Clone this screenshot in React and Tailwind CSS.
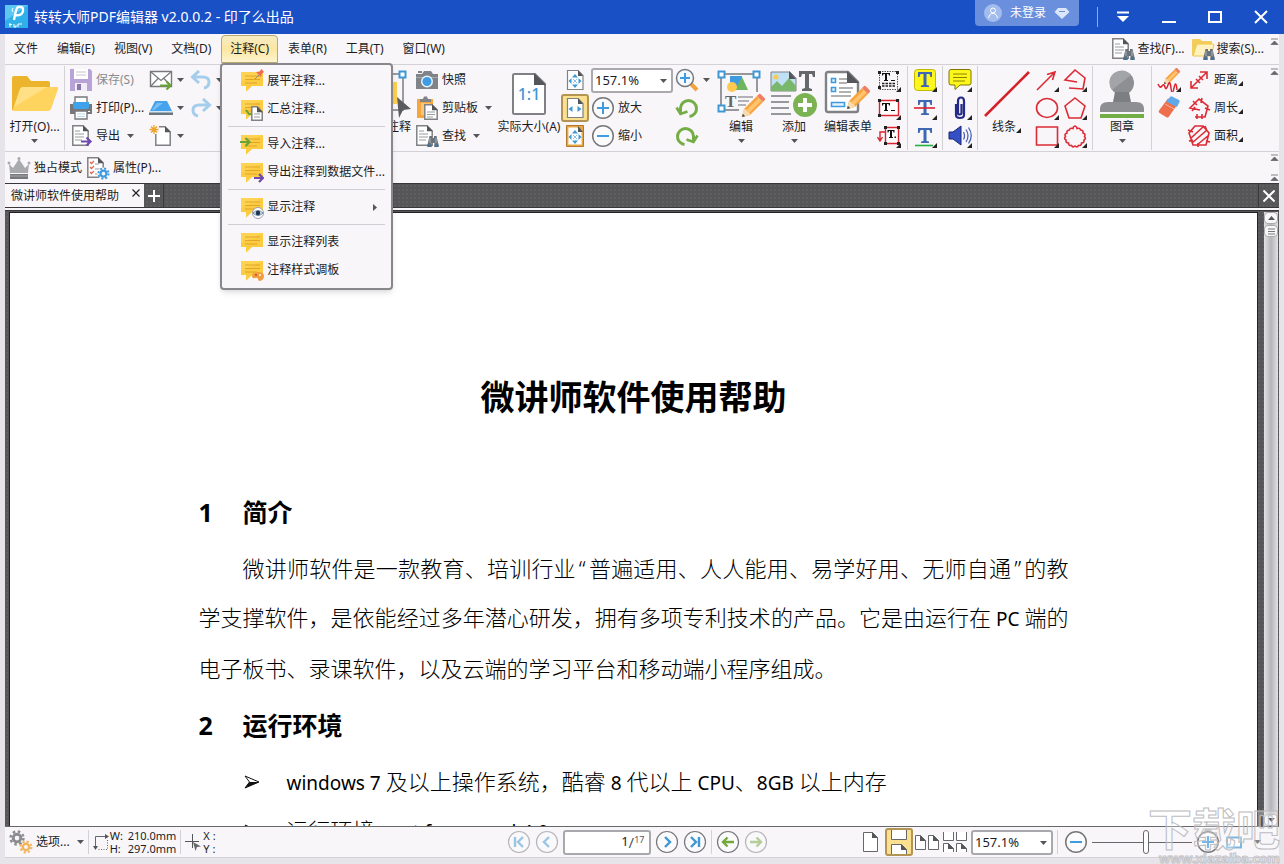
import React from "react";

/* ---------- drawing helpers ---------- */

function Icon({ w = 24, h = 24, box, children }) {
  return (
    <svg width={w} height={h} viewBox={box || `0 0 ${w} ${h}`} fill="none" aria-hidden="true" className="shrink-0">
      {children}
    </svg>
  );
}

const Caret = () => (
  <Icon w={7} h={4}>
    <path d="M0 0h7L3.5 4z" fill="#55565a" />
  </Icon>
);

const Corner = ({ x = 24, y = 24 }) => <path d={`M${x} ${y - 5}v5h-5z`} fill="#222" />;

const FoldedPage = ({ x = 0, y = 0, w = 16, h = 20 }) => (
  <g transform={`translate(${x} ${y})`}>
    <path d={`M.8.8H${w - 6}L${w - 0.8} 6V${h - 0.8}H.8z`} fill="#fff" stroke="#808184" strokeWidth="1.5" />
    <path d={`M${w - 6} .3V6.3H${w}z`} fill="#55565a" />
  </g>
);

const PageLines = ({ x = 0, y = 0 }) => (
  <path d={`M${x} ${y}h5M${x} ${y + 3}h9M${x} ${y + 6}h9M${x} ${y + 9}h7`} stroke="#9a9b9e" strokeWidth="1.2" />
);

const Binoculars = ({ x = 12, y = 11 }) => (
  <g transform={`translate(${x} ${y})`}>
    <path d="M2.5 1h2.5v2h2V1h2.5l2 8.500V12H7.500V8h-3v4H.5V9.500z" fill="#6a737b" />
    <path d="M.5 9.500h4V12h-4zM7.500 9.500h4V12h-4z" fill="#49708f" />
    <path d="M3 3v5M9 3v5" stroke="#a9b3ba" />
  </g>
);

const Pencil = ({ x = 0, y = 0, s = 1 }) => (
  <g transform={`translate(${x} ${y}) scale(${s})`}>
    <path d="M0 23l2-8L15 2l6 6L8 21z" fill="#f8a440" />
    <path d="M3.500 17L17 4l2.500 2.500L6 20z" fill="#ffc46e" />
    <path d="M15 2l2-2q1-.6 2 .4l3.500 3.500q1 1 .3 2L21 8z" fill="#f07f62" />
    <path d="M0 23l2-8q3 .5 3 3 3 0 3 3z" fill="#f7dcb2" />
    <path d="M0 23l.8-3.200 2.400 2.400z" fill="#444" />
  </g>
);

const NoteShape = ({ x = 1, y = 3 }) => (
  <g transform={`translate(${x} ${y})`}>
    <path d="M0 0h22v14H11l-6 5.500V14H0z" fill="#fdd351" />
    <path d="M0 10L22 0v14H11l-6 5.500V14H0z" fill="#f9c73c" opacity=".7" />
    <path d="M4 4h15M4 7.500h15M4 11h12" stroke="#e2a52a" strokeWidth="1.200" />
  </g>
);

const FourArrows = ({ cx = 8, cy = 10 }) => (
  <g transform={`translate(${cx} ${cy})`} fill="#3f97d3">
    <path d="M0-7l3 3.500h-6zM0 7l3-3.500h-6zM-6.500 0l3-3v6zM6.500 0l-3-3v6z" />
    <path d="M-2-2l4 4M2-2l-4 4" stroke="#8cc3e8" />
  </g>
);

/* ---------- toolbar icons ---------- */

const FolderIcon = ({ w = 48, h = 40 }) => (
  <Icon w={w} h={h} box="0 0 48 40">
    <path d="M1 4q0-2 2-2h13l4 5h17q2 0 2 2v5H12L3 37q-2 0-2-2z" fill="#ecb42c" />
    <path d="M12 13h34q2 0 1 2l-7 20q-1 2-3 2H3q-2 0-1-2l7-20q1-2 3-2z" fill="#ffd45e" />
    <path d="M12 13h24L3 33l6-18q1-2 3-2z" fill="#ffe085" />
  </Icon>
);
const SaveIcon = () => (
  <Icon>
    <path d="M1 1h20l2 2v20H1z" fill="#b8a3d6" />
    <path d="M5 1h14v10H5z" fill="#fff" />
    <path d="M7 4h10M7 7h10" stroke="#c6c6cc" />
    <path d="M6 15h12v8H6z" fill="#f0edf6" />
    <path d="M8 16h4v6H8z" fill="#8b77ad" />
  </Icon>
);
const PrintIcon = () => (
  <Icon>
    <path d="M6 1h12v7H6z" fill="#fff" stroke="#77787b" strokeWidth="1.400" />
    <path d="M1 8h22v10H1z" fill="#77787b" />
    <path d="M4 6h16v5q0 2-2 2H6q-2 0-2-2z" fill="#3fa2ec" />
    <path d="M6 15h12v8H6z" fill="#fff" stroke="#77787b" strokeWidth="1.400" />
    <path d="M8 18h8M8 20.500h8" stroke="#b7dbf3" />
    <path d="M19 15.500h2" stroke="#fff" />
  </Icon>
);
const ExportIcon = () => (
  <Icon>
    <FoldedPage x={3} y={1} w={17} h={21} />
    <PageLines x={6} y={7} />
    <path d="M12 17.500h9M17.500 13.500l4 4-4 4" stroke="#6f4ab0" strokeWidth="2.200" />
  </Icon>
);
const MailIcon = () => (
  <Icon>
    <path d="M1.500 3.500h21v15h-21z" fill="#fff" stroke="#77787b" strokeWidth="1.400" />
    <path d="M2 4l10 8.500L22 4M2 18l7.500-8M22 18l-7.500-8" stroke="#77787b" strokeWidth="1.200" />
    <path d="M11 17.500h10M17.500 13.500l4 4-4 4" stroke="#6aa338" strokeWidth="2.200" />
  </Icon>
);
const ScanIcon = () => (
  <Icon>
    <path d="M6 5h12l5 10H1z" fill="#45a3ee" />
    <path d="M8 7h6l-9 7H3z" fill="#7cc0f5" />
    <path d="M0 15h24v4H0z" fill="#6b7680" />
    <path d="M0 15h24v1.500H0z" fill="#d7e6f2" />
  </Icon>
);
const NewIcon = () => (
  <Icon>
    <FoldedPage x={6} y={2} w={16} h={20} />
    <path d="M0 0h10v10H4z" fill="#f8f6f9" />
    <path d="M5 1v9M.5 5.500h9M2 2.500l6 6M8 2.500l-6 6" stroke="#f0a32e" strokeWidth="1.300" />
  </Icon>
);
const UndoIcon = ({ flip }) => (
  <Icon w={22} h={20}>
    <g transform={flip ? "translate(22 0) scale(-1 1)" : undefined}>
      <path d="M3 7h10q6 0 6 5t-5 6" stroke="#a5cdec" strokeWidth="3" />
      <path d="M9 1L2.500 7 9 13" stroke="#a5cdec" strokeWidth="3" />
    </g>
  </Icon>
);
const SelectNoteIcon = () => (
  <Icon w={48} h={48}>
    <path d="M6 4h34v36H6z" stroke="#9a9b9e" strokeWidth="2" />
    <path d="M6 12h28v22H6z" fill="#fdd04a" />
    <path d="M10 18h20M10 23h20M10 28h20" stroke="#dba127" strokeWidth="2" />
    <path d="M36.500 1.500h6v6h-6z" fill="#fff" stroke="#3f97d3" strokeWidth="2" />
    <path d="M34 27l14 12-8 1-4 8z" fill="#5a5b5f" />
  </Icon>
);
const CameraIcon = () => (
  <Icon>
    <path d="M1 6h22v15H1z" fill="#808387" />
    <path d="M7 6l2-3h7l2 3zM3 3h4v2H3z" fill="#808387" />
    <path d="M1 9.500h22" stroke="#a6a8ab" />
    <circle cx="12" cy="13.500" r="6" fill="#eaf4fb" />
    <circle cx="12" cy="13.500" r="4.500" fill="#3f9be6" />
  </Icon>
);
const ClipboardIcon = () => (
  <Icon>
    <path d="M2 3h16v19H2z" fill="#f6a63c" />
    <path d="M5 3h3l1-2.500h3L13 3h3v3H5z" fill="#808387" />
    <path d="M6 7h9v12H6z" fill="#fbc67c" />
    <FoldedPage x={9} y={8} w={14} h={16} />
    <path d="M12 16h8M12 18.500h8M12 21h6" stroke="#9a9b9e" />
  </Icon>
);
const FindIcon = () => (
  <Icon>
    <FoldedPage x={1} y={1} w={17} h={21} />
    <PageLines x={4} y={7} />
    <Binoculars />
  </Icon>
);
const FolderSearchIcon = () => (
  <Icon>
    <path d="M1 3q0-1 1-1h7l2 2h9q1 0 1 1v3H7L2 19q-1 0-1-1z" fill="#f3cd5b" />
    <path d="M7 7h15q1 0 1 1l-3 10q0 1-1 1H2L5.500 8q.5-1 1.500-1z" fill="#fff2bf" stroke="#f0c64e" />
    <Binoculars />
  </Icon>
);
const ActualSizeIcon = () => (
  <Icon w={36} h={44}>
    <path d="M2 3.500Q2 2 3.500 2H24l10 10v28.500q0 1.500-1.500 1.500h-29Q2 42 2 40.500z" fill="#fff" stroke="#808184" strokeWidth="2" />
    <path d="M23 1v12h12z" fill="#55565a" />
    <text x="18" y="28" textAnchor="middle" fontSize="16" fill="#3d97d6" className="font-['Noto_Sans',sans-serif] font-medium">1:1</text>
  </Icon>
);
const FitPageIcon = ({ mode }) => (
  <Icon w={18} h={22}>
    {mode === "visible" && <path d="M.5.500h17v21H.5z" fill="#e7a646" stroke="#b17a2b" />}
    <path d={mode === "visible" ? "M3 3h8l4 4v12H3z" : "M1.500 1.500H12l5 5v14H1.500z"} fill="#fff" stroke={mode === "visible" ? "#fff" : "#808184"} strokeWidth="1.200" />
    <path d="M12 1v6h5z" fill="#55565a" />
    {mode === "width" ? (
      <path d="M2.500 12l4-3v6zM15.500 12l-4-3v6z" fill="#3f97d3" />
    ) : (
      <FourArrows cx={9} cy={12} />
    )}
  </Icon>
);
const CircleIcon = ({ plus }) => (
  <Icon>
    <circle cx="12" cy="12" r="10.300" fill="#fbfbfc" stroke="#77787b" strokeWidth="1.500" />
    <path d={plus ? "M6 12h12M12 6v12" : "M6 12h12"} stroke="#3f9be0" strokeWidth="2" />
  </Icon>
);
const MagnifierIcon = () => (
  <Icon>
    <path d="M16 16l6 6" stroke="#f3a33b" strokeWidth="4" />
    <circle cx="10" cy="10" r="8.500" fill="#f4fafe" stroke="#77787b" strokeWidth="1.500" />
    <path d="M5 10h10M10 5v10" stroke="#3f9be0" strokeWidth="2" />
  </Icon>
);
const RotateIcon = ({ flip }) => (
  <Icon>
    <g transform={flip ? "translate(24 0) scale(-1 1)" : undefined}>
      <path d="M5.500 17V12a8 8 0 1 1 9 8.500" stroke="#74ac45" strokeWidth="3" />
      <path d="M1.500 11.500l4 6.500 7-2.500" stroke="#74ac45" strokeWidth="2.600" />
    </g>
  </Icon>
);
const EditIcon = () => (
  <Icon w={48} h={48}>
    <path d="M4 4h36v18M4 4v36h18" stroke="#97989b" strokeWidth="2" />
    <path d="M13 6h12v11H13z" fill="#3f9be0" />
    <path d="M18 20l7-13 6 13z" fill="#6fb560" />
    <circle cx="15" cy="17" r="5" fill="#fdc94f" />
    <path d="M1.500 1.500h6v6h-6zM36.500 1.500h6v6h-6zM1.500 35.500h6v6h-6z" fill="#fff" stroke="#3f97d3" strokeWidth="2" />
    <text x="8" y="37" fontSize="17" fill="#66676b" className="font-['Liberation_Serif',serif] font-bold">T</text>
    <path d="M21 27h15M21 31h11M21 35h8" stroke="#9a9b9e" strokeWidth="1.500" />
    <Pencil x={25} y={24} />
  </Icon>
);
const AddIcon = () => (
  <Icon w={48} h={48}>
    <path d="M1 2h19l6 6v13H1z" fill="#bfe0f5" stroke="#808184" />
    <path d="M1 17l6-6 5 5 7-8 7 8v5H1z" fill="#79b76a" />
    <circle cx="6" cy="7" r="2.500" fill="#fdc94f" />
    <path d="M19 1v8h7z" fill="#55565a" />
    <path d="M29 1h16v6h-2l-1-3h-3v14l3 1v2H32v-2l3-1V4h-3l-1 3h-2z" fill="#66676b" />
    <path d="M1 26h20M1 32h18M1 38h18M1 44h20" stroke="#97989b" strokeWidth="2" />
    <circle cx="35" cy="35" r="12" fill="#7cb352" />
    <path d="M35 28v14M28 35h14" stroke="#fff" strokeWidth="4" />
  </Icon>
);
const EditFormIcon = () => (
  <Icon w={48} h={48}>
    <path d="M2 4q0-2 2-2h20l10 10v28q0 2-2 2H4q-2 0-2-2z" fill="#fff" stroke="#808184" strokeWidth="2.400" />
    <path d="M23 1v12h12z" fill="#55565a" />
    <path d="M7.500 8.500h4v4h-4zM7.500 17.500h4v4h-4zM7.500 32.500h13v4h-13z" fill="#e4f2fb" stroke="#3f9be0" strokeWidth="1.600" />
    <path d="M15 9h8M15 13h8M15 18h14M15 22h12M7 26h20" stroke="#97989b" strokeWidth="1.600" />
    <Pencil x={23} y={16} />
  </Icon>
);
const TextBoxIcon = ({ kind }) => (
  <Icon>
    {kind === "typewriter" && (
      <g>
        <path d="M2.500 3.500h18v18h-18z" stroke="#555" strokeDasharray="1.500 1" />
        <path d="M5 5h8v2.500h-1L11.500 6H10v6h1v1H7v-1h1V6H6.500L6 7.500H5zM14 12h4v1h-4z" fill="#111" />
        <path d="M5 15.500h13M5 18h13" stroke="#222" strokeDasharray="2.500 1" strokeWidth="1.600" />
      </g>
    )}
    {kind === "box" && (
      <g>
        <path d="M2.500 4.500h19v15h-19z" fill="#fff" stroke="#d9242f" strokeWidth="1.400" />
        <path d="M5 7h8v2.500h-1L11.500 8H10v6h1v1H7v-1h1V8H6.500L6 9.500H5zM14 14h4v1h-4z" fill="#111" />
      </g>
    )}
    {kind === "callout" && (
      <g>
        <path d="M8.500 3.500h13v16h-13z" fill="#fff" stroke="#d9242f" strokeWidth="1.400" />
        <path d="M8 8H3v8M.5 13L3 17l2.500-4" stroke="#d9242f" strokeWidth="1.400" />
        <path d="M10.500 6h7v2.500h-1L16 7h-1v6h1v1h-4v-1h1V7h-1l-.5 1.500h-1zM17.500 12.500h1.500V14h-1.500z" fill="#111" />
      </g>
    )}
    <path
      d={kind === "callout" ? "M7 2h3v3H7zM20 2h3v3h-3zM7 18h3v3H7zM20 18h3v3h-3z" : "M1 3h3v3H1zM19 3h3v3h-3zM1 18h3v3H1z"}
      fill="#222"
    />
    <Corner />
  </Icon>
);
const MarkTextIcon = ({ kind }) => (
  <Icon>
    {kind === "highlight" && <rect x="1.500" y="1.500" width="21" height="21" rx="3" fill="#fdf61d" stroke="#c5b800" />}
    <path d="M5 4h14v5h-1.500L16.500 6H13.500v11l2.500.6V19H8v-1.400l2.500-.6V6H7.500L6.500 9H5z" fill="#3d68b5" />
    {kind === "strike" && <path d="M1 12h21" stroke="#d9242f" strokeWidth="1.600" />}
    {kind === "underline" && <path d="M2 21.500h18" stroke="#24b33c" strokeWidth="1.600" />}
    <Corner />
  </Icon>
);
const StickyIcon = () => (
  <Icon>
    <path d="M3 1.500h18q2 0 2 2V15q0 2-2 2h-9l-5 4.500V17H3q-2 0-2-2V3.500q0-2 2-2z" fill="#fdf61d" stroke="#7d7600" />
    <path d="M5 6h14M5 9.500h14M5 13h12" stroke="#8c8400" />
    <Corner />
  </Icon>
);
const ClipIcon = () => (
  <Icon>
    <path d="M8 8v11q0 3 4 3t4-3V5q0-3.500-3-3.500T10 5v12q0 1.500 1.700 1.500T13.500 17V8" stroke="#252a86" strokeWidth="2.200" />
    <Corner />
  </Icon>
);
const SoundIcon = () => (
  <Icon>
    <path d="M1 8h4l8-6v19l-8-6H1z" fill="#3550c4" stroke="#1b2678" />
    <path d="M15.500 8q2 4 0 7.500M18 5.500q4 6 0 12.500M20.500 3.500q5.500 8 0 16" stroke="#4a63b8" strokeWidth="1.300" />
    <Corner />
  </Icon>
);
const LineIcon = () => (
  <Icon w={48} h={48}>
    <path d="M2 46L46 2" stroke="#d3222c" strokeWidth="2.600" />
  </Icon>
);
const ShapeIcon = ({ kind }) => (
  <Icon>
    <g stroke="#dc2b35" strokeWidth="1.600">
      {kind === "arrow" && <path d="M2 22L20 4M12 6.500l8-2.500-2.500 8" />}
      {kind === "polyline" && <path d="M14 14L2 12 12 2l10 8-2 11-14-1" />}
      {kind === "circle" && <ellipse cx="12" cy="12" rx="10.500" ry="9.500" />}
      {kind === "polygon" && <path d="M12 2l10 8-4 12H6L2 10z" />}
      {kind === "rect" && <path d="M1.500 3h21v18h-21z" />}
      {kind === "cloud" && (
        <path d="M12 2q2 .5 2 2.500 3-1 3.500 1.500 3 0 2.500 3 3 1 1.500 3.500 2 2-.5 3.500.5 3-2.500 3 0 3-3 2.500-1.500 2.500-3.500.5-2 2-3.500-.5-3 .5-3-2.500-3 0-2.500-3-2.500-1.500-.5-3.500-1.500-2.500 1.500-3.500-.5-3 2.500-3Q6.500 3.500 10 4.500q0-2 2-2.500z" />
      )}
    </g>
    <Corner />
  </Icon>
);
const StampIcon = () => (
  <Icon w={48} h={48}>
    <circle cx="24" cy="13" r="12" fill="#8e8f92" />
    <path d="M14 20A12 12 0 0 1 33 5z" fill="#a3a4a7" />
    <path d="M17 22h14l2 10H15z" fill="#7d7e81" />
    <path d="M2 42v-3q0-7 8-7h28q8 0 8 7v3z" fill="#8e8f92" />
    <path d="M2 44h44v4H2z" fill="#73ad45" />
  </Icon>
);
const DrawIcon = () => (
  <Icon>
    <Pencil x={7} y={0} s={0.7} />
    <path d="M1 16q2 5 4 2t3 1 3-2 3 3 3 0 3 2" stroke="#d9242f" strokeWidth="1.500" />
    <Corner />
  </Icon>
);
const EraserIcon = () => (
  <Icon>
    <path d="M11 2.500l10 5-9 13q-1 1.500-2.500.7L2.500 17q-1.500-1-.5-2.500z" fill="#ee6f4c" />
    <path d="M13 1q1-1 2-.5l7 3.500q1 .5.5 2L20 11 9 5.500z" fill="#5fa9ea" />
    <path d="M8 8l9 5" stroke="#f8b49f" />
  </Icon>
);
const MeasureIcon = ({ kind }) => (
  <Icon>
    <g stroke="#dc2b35" strokeWidth="1.600">
      {kind === "distance" && <path d="M4 20L20 4M13 4h7v7M4 13v7h7M9 11l4 4M12 8l4 4" />}
      {kind === "perimeter" && <path d="M13 14L3 12 12 3l9 7-3 11H8M6 5l4 4M15 2l-1 5M18 12l5 2M15 18v5M8 11l-3 4M10 18v5" />}
      {kind === "area" && <path d="M8 2h8l6 7-3 12H6L2 9zM4 14L16 3M5 19L20 6M10 21L22 11M1 6l5 2M18 2l2 5M19 17l4 1M11 19v4M2 17l4-1" />}
    </g>
  </Icon>
);
const CrownIcon = () => (
  <Icon>
    <path d="M2 8l4 4 6-9 6 9 4-4-1 9H3z" fill="#a9aaad" />
    <path d="M3 18h18v5H3z" fill="#77787b" />
    <path d="M3 20h18" stroke="#a9aaad" />
    <circle cx="2" cy="7" r="1.500" fill="#a9aaad" />
    <circle cx="12" cy="2.500" r="1.500" fill="#a9aaad" />
    <circle cx="22" cy="7" r="1.500" fill="#a9aaad" />
  </Icon>
);
const Gear = ({ x, y, s = 1, c }) => (
  <g transform={`translate(${x} ${y}) scale(${s})`}>
    <circle r="4" stroke={c} strokeWidth="3" />
    <circle r="6.800" stroke={c} strokeWidth="2.600" strokeDasharray="2.670" />
  </g>
);
const PropsIcon = () => (
  <Icon>
    <FoldedPage x={1} y={1} w={17} h={21} />
    <path d="M4 6l1.500 1.500L8 5M4 11l1.500 1.500L8 10M4 16l1.500 1.500L8 15" stroke="#e2674e" strokeWidth="1.300" />
    <path d="M9 8h4M9 13h6M9 18h3" stroke="#9a9b9e" />
    <circle cx="17.500" cy="17.500" r="6" fill="#f8f6f9" />
    <Gear x={17.5} y={17.5} s={0.75} c="#3f9be0" />
  </Icon>
);

/* ---------- menu icons ---------- */

const NoteIcon = ({ kind }) => (
  <Icon>
    <NoteShape />
    {kind === "flatten" && (
      <g>
        <path d="M15 10l4-4" stroke="#8b8c8f" />
        <path d="M16 3l5 5 .5-3L24 3l-2.500-3-2 2.500z" fill="#ef6b4d" />
      </g>
    )}
    {kind === "summary" && (
      <g>
        <path d="M6 13l3 4h4" stroke="#6aa338" strokeWidth="2" />
        <FoldedPage x={11} y={9} w={12} h={15} />
        <path d="M14 17h6M14 20h6" stroke="#9a9b9e" />
      </g>
    )}
    {kind === "import" && <path d="M0 10h9M5.500 6l4 4-4 4" stroke="#6aa338" strokeWidth="2.200" />}
    {kind === "export" && <path d="M14 18h9M19 14l4 4-4 4" stroke="#6f4ab0" strokeWidth="2.200" />}
    {kind === "show" && (
      <g>
        <circle cx="18" cy="18" r="5.500" fill="#fff" stroke="#9aa2ab" />
        <path d="M13 18q5-5 10 0-5 5-10 0z" fill="#d7e7f4" stroke="#6c88a0" />
        <circle cx="18" cy="18" r="2.300" fill="#1f3550" />
      </g>
    )}
    {kind === "palette" && (
      <g>
        <path d="M12 18q0-4 6-4t6 4-4 5q-2 0-2-2t-3-1-3-2z" fill="#f39c3c" />
        <circle cx="16" cy="17" r="1" fill="#c4542a" />
        <circle cx="20" cy="17" r="1" fill="#fff" />
      </g>
    )}
  </Icon>
);

/* ---------- building blocks ---------- */

const CornerMark = () => (
  <Icon w={5} h={12}>
    <path d="M5 7v5H0z" fill="#222" />
  </Icon>
);

function Row({ icon, label, caret, corner, dim }) {
  return (
    <button type="button" className={`flex h-7 items-center gap-[3px] whitespace-nowrap text-left ${dim ? "text-[#8b8b8e]" : ""}`}>
      {icon}
      <span className="flex items-center">
        {label}
        {corner && <CornerMark />}
      </span>
      {caret && <span className="ml-1"><Caret /></span>}
    </button>
  );
}

function IconButton({ icon, label, caret }) {
  return (
    <button type="button" aria-label={label} className="flex h-7 items-center gap-1">
      {icon}
      {caret && <Caret />}
    </button>
  );
}

function BigButton({ icon, label, caret, corner }) {
  return (
    <button type="button" className="flex h-full w-full flex-col items-center pt-1">
      <span className="flex h-12 items-center">{icon}</span>
      <span className="flex h-[18px] items-center whitespace-nowrap">
        {label}
        {corner && <CornerMark />}
      </span>
      {caret && <span className="mt-[3px]"><Caret /></span>}
    </button>
  );
}

const Divider = () => <div className="w-px shrink-0 self-stretch bg-[#d3d1d6]" />;

const Collapse = () => (
  <Icon w={9} h={7}>
    <path d="M1 1h7M4.500 3L8 6.500H1z" stroke="#66676b" fill="#66676b" strokeWidth=".8" />
  </Icon>
);

function ZoomSelect({ label }) {
  return (
    <div className="relative w-[82px] shrink-0">
      <select aria-label={label} defaultValue="157.1%" className="h-[25px] w-full appearance-none rounded-[3px] border-2 border-[#a9a8ad] bg-white pl-0.5 text-[13px] leading-4">
        <option>157.1%</option>
        <option>100%</option>
      </select>
      <span className="pointer-events-none absolute right-1.5 top-[11px]"><Caret /></span>
    </div>
  );
}

/* ---------- sections ---------- */

function TitleBar() {
  return (
    <header className="flex h-[34px] shrink-0 items-center bg-[#1950c6] px-1 text-white">
      <Icon w={25} h={24}>
        <rect x="1" width="23" height="23" fill="#2fb0e8" />
        <path d="M1 0h23L1 16z" fill="#5cc8f2" />
        <path d="M10 15q2-12 4-13 6-1 5 4t-7 4" stroke="#fff" strokeWidth="2.400" />
        <path d="M9 3q-2 2 0 4M6 18v4M5 19.500h3M10 19v3h2v-2M14 22v-3h4" stroke="#fff" />
      </Icon>
      <h1 className="ml-[5px] flex-1 text-sm">转转大师PDF编辑器 v2.0.0.2 - 印了么出品</h1>
      <button type="button" className="mr-[18px] flex h-[26px] w-[104px] items-center justify-center gap-2 self-start rounded-b-sm bg-[#6a8fdc] text-xs">
        <Icon w={18} h={18}>
          <circle cx="9" cy="9" r="9" fill="#a3bcee" />
          <circle cx="9" cy="6.500" r="2.500" stroke="#fff" />
          <path d="M4.500 14q1-4.500 4.500-4.500t4.500 4.500" stroke="#fff" />
        </Icon>
        <span>未登录</span>
        <Icon w={16} h={12}>
          <path d="M4 1h8l3.500 4L8 12 .5 5z" fill="#dbe6fb" />
          <path d="M5 4.500h6" stroke="#6a8fdc" />
        </Icon>
      </button>
      <div className="h-5 w-px bg-[#8fabe8]" />
      <div className="flex items-center gap-8 pl-[18px] pr-3">
        <button type="button" aria-label="更多">
          <Icon w={14} h={14}><path d="M1 2.500h12" stroke="#fff" strokeWidth="2" /><path d="M1 6h12l-6 6z" fill="#fff" /></Icon>
        </button>
        <button type="button" aria-label="最小化">
          <Icon w={14} h={14}><path d="M0 12h14" stroke="#fff" strokeWidth="2" /></Icon>
        </button>
        <button type="button" aria-label="最大化">
          <Icon w={14} h={14}><path d="M1 2h12v10H1z" stroke="#fff" strokeWidth="2" /></Icon>
        </button>
        <button type="button" aria-label="关闭">
          <Icon w={14} h={14}><path d="M1 1l12 12M13 1L1 13" stroke="#fff" strokeWidth="2" /></Icon>
        </button>
      </div>
    </header>
  );
}

const menuGroups = [
  [["flatten", "展平注释..."], ["summary", "汇总注释..."]],
  [["import", "导入注释..."], ["export", "导出注释到数据文件..."]],
  [["show", "显示注释"]],
  [["list", "显示注释列表"], ["palette", "注释样式调板"]],
];

function AnnotationMenu() {
  return (
    <div role="menu" className="absolute -left-px top-full z-20 w-[173px] rounded border-2 border-[#88878c] bg-[#f8f6f9] px-1.5 pb-1 pt-0.5 shadow-md">
      {menuGroups.map((group, i) => (
        <div key={i} className={i ? "mt-[3px] border-t border-[#d0ced3] pt-[3px]" : ""}>
          {group.map(([kind, label]) => (
            <button key={kind} type="button" role="menuitem" className="flex h-7 w-full items-center gap-[3px] whitespace-nowrap pl-3">
              <NoteIcon kind={kind} />
              <span>{label}</span>
              {kind === "show" && (
                <span className="ml-auto pr-2"><Icon w={4} h={7}><path d="M0 0l4 3.500L0 7z" fill="#55565a" /></Icon></span>
              )}
            </button>
          ))}
        </div>
      ))}
    </div>
  );
}

function MenuBar() {
  const item = "h-full whitespace-nowrap px-[9px]";
  return (
    <nav className="flex h-[31px] shrink-0 items-center border-b border-[#d3d1d6]">
      <div className="flex h-7 items-center gap-px">
        {["文件", "编辑(E)", "视图(V)", "文档(D)"].map((t) => (
          <button key={t} type="button" className={item}>{t}</button>
        ))}
        <div className="relative h-full">
          <button type="button" aria-haspopup="menu" aria-expanded="true" className="h-full whitespace-nowrap rounded-t-sm border border-[#b9a672] bg-gradient-to-b from-[#f6ebc4] via-[#fbe7a0] to-[#fdf3cf] px-2">
            注释(C)
          </button>
          <AnnotationMenu />
        </div>
        {["表单(R)", "工具(T)", "窗口(W)"].map((t) => (
          <button key={t} type="button" className={item}>{t}</button>
        ))}
      </div>
      <div className="ml-auto flex items-center gap-1.5">
        <button type="button" className="flex items-center gap-0.5 whitespace-nowrap"><FindIcon />查找(F)...</button>
        <button type="button" className="flex items-center gap-0.5 whitespace-nowrap"><FolderSearchIcon />搜索(S)...</button>
        <span className="-mt-4"><Collapse /></span>
      </div>
    </nav>
  );
}

function Ribbon() {
  const col = "flex shrink-0 flex-col";
  return (
    <div className="flex h-[87px] shrink-0 overflow-hidden border-b border-[#d3d1d6] pb-px pt-px">
      <div className="w-[59px] shrink-0"><BigButton icon={<FolderIcon />} label="打开(O)..." caret /></div>
      <Divider />
      <div className={`${col} w-[84px] pl-1`}>
        <Row icon={<SaveIcon />} label="保存(S)" dim />
        <Row icon={<PrintIcon />} label="打印(P)..." />
        <Row icon={<ExportIcon />} label="导出" caret />
      </div>
      <div className={`${col} w-[41px]`}>
        <IconButton icon={<MailIcon />} label="邮件" caret />
        <IconButton icon={<ScanIcon />} label="扫描" caret />
        <IconButton icon={<NewIcon />} label="新建" caret />
      </div>
      <div className={`${col} w-[38px]`}>
        <IconButton icon={<UndoIcon />} label="撤销" caret />
        <IconButton icon={<UndoIcon flip />} label="重做" caret />
      </div>
      <div className="flex w-[183px] shrink-0 justify-end">
        <div className="w-12"><BigButton icon={<SelectNoteIcon />} label="选择注释" /></div>
      </div>
      <div className={`${col} w-[86px] pl-1`}>
        <Row icon={<CameraIcon />} label="快照" />
        <Row icon={<ClipboardIcon />} label="剪贴板" caret />
        <Row icon={<FindIcon />} label="查找" caret />
      </div>
      <div className="w-[64px] shrink-0"><BigButton icon={<ActualSizeIcon />} label="实际大小(A)" /></div>
      <div className={`${col} w-[30px]`}>
        <button type="button" aria-label="适合页面" className="flex h-7 w-7 items-center justify-center"><FitPageIcon /></button>
        <button type="button" aria-label="适合宽度" className="flex h-7 w-7 items-center justify-center rounded-[3px] border-2 border-[#b39453] bg-[#fbe08f]"><FitPageIcon mode="width" /></button>
        <button type="button" aria-label="适合可见" className="flex h-7 w-7 items-center justify-center"><FitPageIcon mode="visible" /></button>
      </div>
      <div className={`${col} w-[84px]`}>
        <div className="flex h-7 items-center"><ZoomSelect label="缩放比例" /></div>
        <Row icon={<CircleIcon plus />} label="放大" />
        <Row icon={<CircleIcon />} label="缩小" />
      </div>
      <div className={`${col} w-[38px]`}>
        <IconButton icon={<MagnifierIcon />} label="放大工具" caret />
        <IconButton icon={<RotateIcon />} label="逆时针旋转" />
        <IconButton icon={<RotateIcon flip />} label="顺时针旋转" />
      </div>
      <div className="w-14 shrink-0"><BigButton icon={<EditIcon />} label="编辑" caret /></div>
      <div className="w-[50px] shrink-0"><BigButton icon={<AddIcon />} label="添加" caret /></div>
      <div className="w-[58px] shrink-0"><BigButton icon={<EditFormIcon />} label="编辑表单" /></div>
      <div className={`${col} w-[30px]`}>
        <IconButton icon={<TextBoxIcon kind="typewriter" />} label="打字机" />
        <IconButton icon={<TextBoxIcon kind="box" />} label="文本框" />
        <IconButton icon={<TextBoxIcon kind="callout" />} label="标注框" />
      </div>
      <Divider />
      <div className={`${col} w-[34px] items-center`}>
        <IconButton icon={<MarkTextIcon kind="highlight" />} label="高亮" />
        <IconButton icon={<MarkTextIcon kind="strike" />} label="删除线" />
        <IconButton icon={<MarkTextIcon kind="underline" />} label="下划线" />
      </div>
      <Divider />
      <div className={`${col} w-[34px] items-center`}>
        <IconButton icon={<StickyIcon />} label="便签" />
        <IconButton icon={<ClipIcon />} label="附件" />
        <IconButton icon={<SoundIcon />} label="声音" />
      </div>
      <Divider />
      <div className="w-[57px] shrink-0"><BigButton icon={<LineIcon />} label="线条" corner /></div>
      <div className={`${col} w-7`}>
        <IconButton icon={<ShapeIcon kind="arrow" />} label="箭头" />
        <IconButton icon={<ShapeIcon kind="circle" />} label="椭圆" />
        <IconButton icon={<ShapeIcon kind="rect" />} label="矩形" />
      </div>
      <div className={`${col} w-[29px]`}>
        <IconButton icon={<ShapeIcon kind="polyline" />} label="折线" />
        <IconButton icon={<ShapeIcon kind="polygon" />} label="多边形" />
        <IconButton icon={<ShapeIcon kind="cloud" />} label="云形" />
      </div>
      <Divider />
      <div className="w-[58px] shrink-0"><BigButton icon={<StampIcon />} label="图章" caret /></div>
      <Divider />
      <div className={`${col} w-[35px] pl-[5px]`}>
        <IconButton icon={<DrawIcon />} label="铅笔" />
        <IconButton icon={<EraserIcon />} label="橡皮擦" />
      </div>
      <div className={col}>
        <Row icon={<MeasureIcon kind="distance" />} label="距离" corner />
        <Row icon={<MeasureIcon kind="perimeter" />} label="周长" corner />
        <Row icon={<MeasureIcon kind="area" />} label="面积" corner />
      </div>
      <span className="ml-auto pt-0.5"><Collapse /></span>
    </div>
  );
}

function SecondaryBar() {
  return (
    <div className="flex h-[31px] shrink-0 items-center gap-1 pl-0.5">
      <Row icon={<CrownIcon />} label="独占模式" />
      <Row icon={<PropsIcon />} label="属性(P)..." />
      <span className="ml-auto flex h-full flex-col justify-between py-0.5"><Collapse /><Collapse /></span>
    </div>
  );
}

const dark = "bg-[#565658] bg-[radial-gradient(#5e5e60_1px,transparent_1px)] bg-[length:4px_4px]";

function TabBar() {
  return (
    <div className={`flex h-[25px] shrink-0 border-y border-[#38383a] ${dark}`}>
      <div className="flex w-[139px] items-center justify-between bg-[#f8f6f9] pl-1.5 pr-1">
        <span>微讲师软件使用帮助</span>
        <button type="button" aria-label="关闭标签" className="-mt-1.5">
          <Icon w={8} h={8}><path d="M.5.500l7 7M7.500.500l-7 7" stroke="#222" strokeWidth="1.200" /></Icon>
        </button>
      </div>
      <button type="button" aria-label="新建标签" className="flex w-5 items-center justify-center border-r border-[#38383a]">
        <Icon w={12} h={12}><path d="M6 0v12M0 6h12" stroke="#fff" strokeWidth="2" /></Icon>
      </button>
      <button type="button" aria-label="关闭文档" className="ml-auto flex w-[21px] items-center justify-center border-l border-[#38383a]">
        <Icon w={12} h={12}><path d="M.500.500l11 11M11.500.500l-11 11" stroke="#fff" strokeWidth="2" /></Icon>
      </button>
    </div>
  );
}

const Latin = ({ children }) => <span className="text-[19px] font-normal">{children}</span>;

const Bullet = ({ children }) => (
  <li className="flex h-[49px] items-center whitespace-pre pl-[45px]">
    <span className="w-[43px]">
      <Icon w={16} h={16}><path d="M1 2l14 6-14 6 4.500-6z" stroke="#111" /><path d="M5.500 8H15L1 14z" fill="#111" /></Icon>
    </span>
    <span>{children}</span>
  </li>
);

function DocumentView() {
  return (
    <div className={`mt-0.5 flex min-h-0 flex-1 border-t border-[#38383a] pl-1 pt-px ${dark}`}>
      <main className="min-w-0 flex-1 overflow-hidden border-l border-t border-[#222] bg-white text-black">
        <article className="mx-auto w-full max-w-[870px] pt-40">
          <h2 className="text-center text-[34px] font-bold leading-[48px]">微讲师软件使用帮助</h2>
          <h3 className="mt-[67px] flex text-[25px] font-bold leading-[48px]"><span className="w-11">1</span>简介</h3>
          <p className="mt-2 text-justify indent-11 text-[22px] font-light leading-[49px]">
            微讲师软件是一款教育、培训行业<span className="px-[3px]">“</span>普遍适用、人人能用、易学好用、无师自通<span className="px-[3px]">”</span>的教学支撑软件，是依能经过多年潜心研发，拥有多项专利技术的产品。它是由运行在<Latin> PC </Latin>端的电子板书、录课软件，以及云端的学习平台和移动端小程序组成。
          </p>
          <h3 className="mt-2 flex text-[25px] font-bold leading-[48px]"><span className="w-11">2</span>运行环境</h3>
          <ul className="mt-2 text-[22px] font-light">
            <Bullet><Latin>windows 7 </Latin>及以上操作系统，酷睿<Latin> 8 </Latin>代以上<Latin> CPU</Latin>、<Latin>8GB </Latin>以上内存</Bullet>
            <Bullet>运行环境 <Latin> .net framework4.0</Latin></Bullet>
          </ul>
        </article>
      </main>
      <div className="flex w-[22px] shrink-0 flex-col border-l border-[#222] pl-[6px]">
        <div className="flex h-full w-[14px] flex-col bg-gradient-to-r from-[#e2e1e4] via-[#b5b4b8] to-[#e2e1e4]">
          <button type="button" aria-label="向上滚动" className="flex h-3 items-center justify-center rounded-sm border border-[#aaa] bg-[#f8f6f9]">
            <Icon w={7} h={4}><path d="M0 4h7L3.500 0z" fill="#55565a" /></Icon>
          </button>
          <div className="mt-px flex h-3 items-center justify-center rounded-sm border border-[#aaa] bg-[#f8f6f9]">
            <Icon w={7} h={7}><path d="M0 1h7M0 3.500h7M0 6h7" stroke="#77787b" /></Icon>
          </div>
          <button type="button" aria-label="向下滚动" className="mt-auto flex h-3 items-center justify-center rounded-sm border border-[#aaa] bg-[#f8f6f9]"><Caret /></button>
        </div>
      </div>
    </div>
  );
}

const navPaths = {
  first: "M8 7v10M16 7l-5 5 5 5",
  prev: "M14 7l-5 5 5 5",
  next: "M10 7l5 5-5 5",
  last: "M8 7l5 5-5 5M16 7v10",
  back: "M18 12H7M11.500 7.500L7 12l4.500 4.500",
  forward: "M6 12h11M12.500 7.500L17 12l-4.500 4.500",
};

function NavButton({ kind, label, dim, green }) {
  return (
    <button type="button" aria-label={label} className={dim ? "opacity-50" : ""}>
      <Icon>
        <circle cx="12" cy="12" r="10.500" fill="#fbfafc" stroke="#77787b" strokeWidth="1.200" />
        <path d={navPaths[kind]} stroke={green ? "#74a83b" : "#3f97d3"} strokeWidth="2.400" />
      </Icon>
    </button>
  );
}

const layoutPaths = {
  single: "M4.500 2.500h9l5 5v14h-14z",
  scroll: "M4.500 0v9.500h15V0M4.500 24V14.500h10l5 5V24",
  facing: "M.500 5.500h5l5 5v9H.500zM13.500 5.500h5l5 5v9h-10z",
  grid: "M.500 2v8.500h10V2M13.500 2v8.500h10V2M.500 22v-8.500h5l5 5V22M13.500 22v-8.500h5l5 5V22",
};

const LayoutIcon = ({ kind }) => (
  <Icon>
    <path d={layoutPaths[kind]} fill="#fff" stroke="#66676b" />
    {kind === "single" && <path d="M13 2v6h6z" fill="#55565a" />}
    {kind === "scroll" && <path d="M14 14v6h6z" fill="#55565a" />}
    {kind === "facing" && <path d="M5 5v6h6zM18 5v6h6z" fill="#55565a" />}
    {kind === "grid" && <path d="M5 13v6h6zM18 13v6h6z" fill="#55565a" />}
  </Icon>
);

function StatusBar() {
  return (
    <footer className="grid h-8 shrink-0 grid-cols-[1fr_auto_1fr] items-center border-b border-t border-b-[#d3d1d6] border-t-[#66676b] pl-1 pr-3.5">
      <div className="flex h-7 items-center whitespace-nowrap">
        <Row
          icon={<Icon><Gear x={8} y={8} s={0.95} c="#8b8c8f" /><Gear x={17} y={17} s={0.8} c="#f2b45c" /></Icon>}
          label="选项..."
          caret
        />
        <div className="mx-1 h-6 w-px bg-[#d3d1d6]" />
        <Icon w={16} h={18}>
          <path d="M2.500 16V3.500H14" stroke="#66676b" />
          <path d="M12 1l4 2.500L12 6zM0 13h5l-2.500 4z" fill="#55565a" />
          <path d="M14.500 7v9.500H5" stroke="#66676b" strokeDasharray="1 1.500" />
        </Icon>
        <dl className="ml-px grid grid-cols-[18px_auto] text-[11px] leading-[13px]">
          <dt>W:</dt><dd>210.0mm</dd>
          <dt>H:</dt><dd>297.0mm</dd>
        </dl>
        <div className="mx-1 h-6 w-px bg-[#d3d1d6]" />
        <Icon w={16} h={18}>
          <path d="M7.500 1v14M0 8.500h14" stroke="#55565a" />
          <path d="M8 9l8 4.500-4 .5-1.500 4z" fill="#66676b" />
        </Icon>
        <div className="ml-0.5 text-[11px] leading-[13px]"><div>X :</div><div>Y :</div></div>
      </div>
      <div className="flex items-center gap-1">
        <NavButton kind="first" label="第一页" dim />
        <NavButton kind="prev" label="上一页" dim />
        <div className="flex h-[25px] w-[88px] items-center rounded-[3px] border-2 border-[#a9a8ad] bg-white pr-1">
          <input aria-label="页码" defaultValue="1" className="w-full min-w-0 bg-transparent text-right text-[13px] outline-none" />
          <span className="text-[15px] text-[#55565a]">/</span>
          <span className="mb-1 text-[9px] text-[#55565a]">17</span>
        </div>
        <NavButton kind="next" label="下一页" />
        <NavButton kind="last" label="最后一页" />
        <div className="h-6 w-px bg-[#d3d1d6]" />
        <NavButton kind="back" label="后退" green />
        <NavButton kind="forward" label="前进" green dim />
      </div>
      <div className="mr-1 flex items-center justify-self-end">
        <button type="button" aria-label="单页"><LayoutIcon kind="single" /></button>
        <button type="button" aria-label="连续" className="ml-0.5 flex h-7 w-7 items-center justify-center rounded-[3px] border-2 border-[#b39453] bg-[#fbe08f]"><LayoutIcon kind="scroll" /></button>
        <button type="button" aria-label="双页" className="ml-0.5"><LayoutIcon kind="facing" /></button>
        <button type="button" aria-label="双页连续" className="mx-1"><LayoutIcon kind="grid" /></button>
        <ZoomSelect label="页面缩放" />
        <div className="ml-1 mr-1.5 h-6 w-px bg-[#d3d1d6]" />
        <button type="button" aria-label="缩小"><CircleIcon /></button>
        <input
          type="range"
          aria-label="缩放"
          defaultValue="54"
          className="mx-1 h-6 w-[100px] appearance-none bg-[linear-gradient(#66676b,#66676b)] bg-[length:100%_1px] bg-center bg-no-repeat [&::-webkit-slider-thumb]:h-6 [&::-webkit-slider-thumb]:w-1.5 [&::-webkit-slider-thumb]:appearance-none [&::-webkit-slider-thumb]:rounded-sm [&::-webkit-slider-thumb]:border [&::-webkit-slider-thumb]:border-[#66676b] [&::-webkit-slider-thumb]:bg-white"
        />
        <button type="button" aria-label="放大"><CircleIcon plus /></button>
        <button type="button" aria-label="适合窗口" className="ml-1.5 flex items-center gap-3">
          <Icon w={16} h={14}><path d="M1 2.500h14v10H1z" fill="#fff" stroke="#7db7e0" strokeWidth="2" /></Icon>
          <Caret />
        </button>
      </div>
    </footer>
  );
}

function Watermark() {
  return (
    <div className="pointer-events-none absolute bottom-0 right-0 flex flex-col items-end pr-1 font-bold text-white/30">
      <span className="text-[44px] leading-[46px] [-webkit-text-stroke:1px_#bdbcc0]">下载吧</span>
      <span className="text-[13px] leading-3 [-webkit-text-stroke:1px_#c4c3c7]">www.xiazaiba.com</span>
    </div>
  );
}

export default function App() {
  return (
    <div className="relative flex h-screen flex-col overflow-hidden bg-[#e6e4e8] font-['Noto_Sans','Noto_Sans_CJK_SC',sans-serif] text-xs text-[#1c1c1e]">
      <TitleBar />
      <div className="mx-[5px] mb-1.5 flex min-h-0 flex-1 flex-col bg-[#f8f6f9]">
        <MenuBar />
        <Ribbon />
        <SecondaryBar />
        <TabBar />
        <DocumentView />
        <StatusBar />
      </div>
      <Watermark />
    </div>
  );
}
